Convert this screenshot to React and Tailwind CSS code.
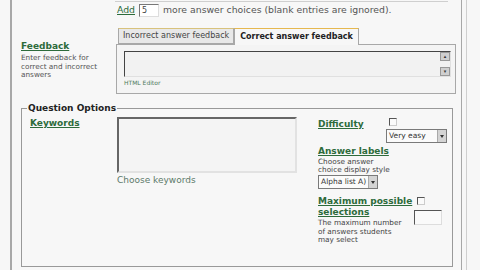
import React from 'react';

const font = { fontFamily: '"DejaVu Sans", Verdana, sans-serif' };

const GreenLabel = ({ children, className = '' }) => (
  <div className={`text-[9px] font-bold text-[#2d6b3b] underline decoration-[#2d6b3b] underline-offset-1 leading-[11px] whitespace-nowrap ${className}`}>
    {children}
  </div>
);

const Select = ({ value, className = '' }) => (
  <div className={`flex items-center h-[14px] border border-[#7a7a7a] bg-[#fbfbfb] ${className}`}>
    <span className="flex-1 pl-[2px] text-[7.5px] text-[#333] leading-none whitespace-nowrap overflow-hidden">{value}</span>
    <span className="w-[9px] h-[12px] bg-[#d4d4d4] border-l border-[#aaa] flex items-center justify-center">
      <span className="w-0 h-0 border-l-[2px] border-r-[2px] border-t-[3px] border-l-transparent border-r-transparent border-t-[#333]" />
    </span>
  </div>
);

const Checkbox = ({ className = '' }) => (
  <div className={`w-[8px] h-[8px] border border-[#555] border-r-[#ccc] border-b-[#ccc] bg-[#fafafa] ${className}`} />
);

export default function App() {
  return (
    <div className="w-[480px] h-[270px] bg-[#f7f7f7] overflow-hidden flex" style={font}>
      {/* main column */}
      <div className="ml-[10px] w-[452px] h-full border-l-2 border-r border-[#a8a8a8] flex flex-col">
        {/* previous row bottom line */}
        <div className="ml-[103px] w-[333px] h-[2px] border-b border-[#cfcfcf]" />

        {/* add more choices */}
        <div className="ml-[105px] mt-[1px] flex items-center gap-[4px] h-[14px]">
          <span className="text-[9.3px] text-[#2d6b3b] underline">Add</span>
          <div className="w-[20px] h-[13px] border border-[#777] border-r-[#ddd] border-b-[#ddd] bg-white text-[8px] text-[#444] pl-[2px] leading-[12px]">5</div>
          <span className="text-[9.3px] text-[#555] whitespace-nowrap">more answer choices (blank entries are ignored).</span>
        </div>

        {/* feedback row */}
        <div className="mt-[10px] flex">
          <div className="ml-[9px] w-[95px] pt-[14px]">
            <GreenLabel className="text-[9.6px]">Feedback</GreenLabel>
            <div className="mt-[2px] text-[7.3px] leading-[8.5px] text-[#555] w-[84px]">
              Enter feedback for correct and incorrect answers
            </div>
          </div>
          <div className="w-[340px] flex flex-col">
            <div className="flex items-end h-[17px] pl-[2px]">
              <div className="h-[16px] px-[4px] bg-[#e8e8e8] border border-[#a8a8a8] border-t-[#d8c27c] flex items-center text-[8px] text-[#444] whitespace-nowrap">
                Incorrect answer feedback
              </div>
              <div className="h-[17px] px-[5px] bg-[#f7f7f7] border border-b-0 border-[#a8a8a8] border-t-[#e6b84f] flex items-center text-[8px] font-bold text-[#222] whitespace-nowrap relative top-[1px]">
                Correct answer feedback
              </div>
            </div>
            <div className="h-[50px] border border-[#a8a8a8] bg-[#f4f4f4] pt-[6px] pl-[7px] pr-[4px]">
              <div className="h-[26px] border border-[#444] border-r-[#e0e0e0] border-b-[#e0e0e0] bg-[#f2f2f2] flex justify-end">
                <div className="w-[10px] flex flex-col justify-between">
                  <div className="h-[9px] bg-[#cfcfcf] border border-[#999] text-[5px] leading-[7px] text-center text-[#333]">▴</div>
                  <div className="h-[9px] bg-[#cfcfcf] border border-[#999] text-[5px] leading-[7px] text-center text-[#333]">▾</div>
                </div>
              </div>
              <div className="mt-[2px] text-[6px] text-[#4d7a5c] leading-[7px]">HTML Editor</div>
            </div>
          </div>
        </div>

        {/* question options */}
        <div className="ml-[9px] mt-[14px] w-[432px] h-[159px] border border-[#999] relative">
          <div className="absolute -top-[6px] left-[5px] px-[1px] bg-[#f7f7f7] text-[9px] font-bold text-[#222] leading-[11px]">
            Question Options
          </div>
          <div className="flex pt-[8px]">
            <div className="w-[95px] pl-[8px] pt-[1px]">
              <GreenLabel>Keywords</GreenLabel>
            </div>
            <div className="w-[201px]">
              <div className="w-[180px] h-[56px] border-2 border-[#666] border-r-[#e2e2e2] border-b-[#e2e2e2] bg-[#f4f4f4]" />
              <div className="mt-[1px] text-[9px] text-[#5d7a6a] leading-[12px]">Choose keywords</div>
            </div>
            <div className="flex-1 pt-[1px]">
              <div className="flex">
                <GreenLabel className="w-[70px] pt-[1px]">Difficulty</GreenLabel>
                <div className="flex flex-col items-start">
                  <Checkbox className="ml-[1px]" />
                  <Select value="Very easy" className="mt-[3px] w-[61px] -ml-[2px]" />
                </div>
              </div>
              <GreenLabel className="mt-[3px]">Answer labels</GreenLabel>
              <div className="mt-[1px] text-[7.3px] leading-[8px] text-[#444] w-[76px]">Choose answer choice display style</div>
              <Select value="Alpha list A)" className="mt-[1px] w-[60px]" />
              <div className="flex mt-[7px]">
                <div className="w-[99px]">
                  <GreenLabel className="leading-[11px]">Maximum possible</GreenLabel>
                  <GreenLabel className="leading-[11px]">selections</GreenLabel>
                  <div className="mt-[1px] text-[7.3px] leading-[8.5px] text-[#444] w-[86px]">
                    The maximum number of answers students may select
                  </div>
                </div>
                <div className="flex flex-col">
                  <Checkbox className="mt-[1px]" />
                  <div className="mt-[5px] -ml-[3px] w-[28px] h-[15px] border border-[#555] border-r-[#ddd] border-b-[#ddd] bg-[#fafafa]" />
                </div>
              </div>
            </div>
          </div>
        </div>
      </div>
      {/* far right line */}
      <div className="ml-[4px] h-full border-l border-[#cfcfcf]" />
    </div>
  );
}
